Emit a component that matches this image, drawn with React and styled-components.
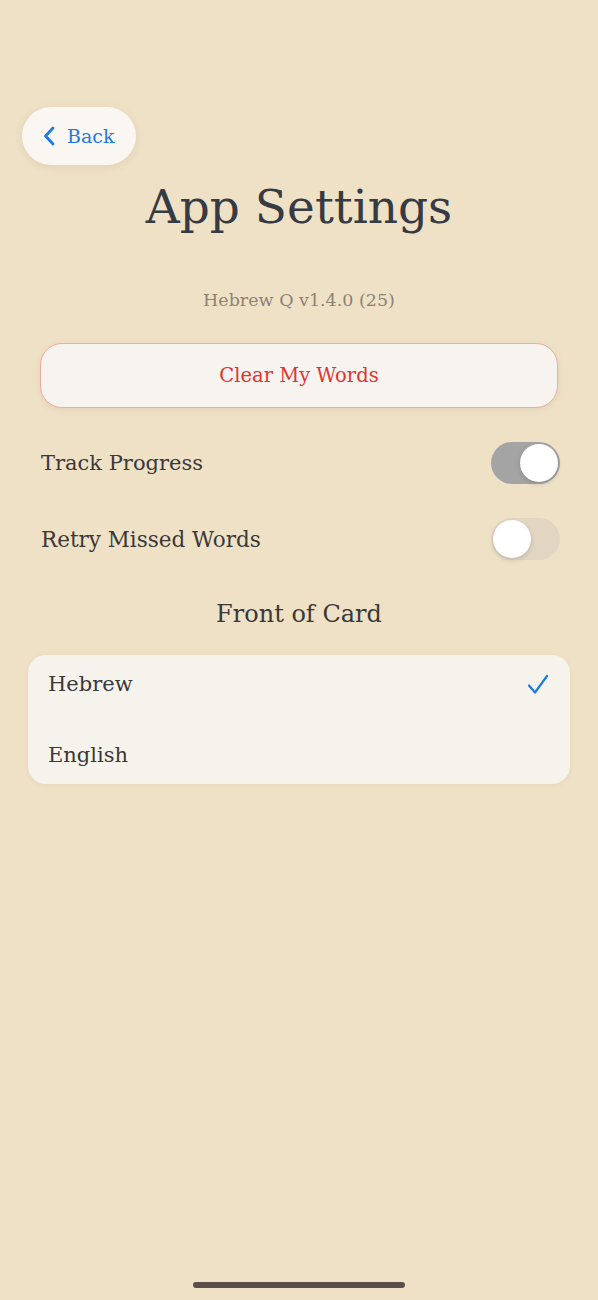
import React from "react";
import styled, { createGlobalStyle } from "styled-components";

const Global = createGlobalStyle`
  html, body { margin: 0; padding: 0; background: #efe1c6; }
  body { font-family: "DejaVu Serif", "Liberation Serif", serif; }
  * { box-sizing: border-box; }
`;

const Page = styled.div`
  width: 598px;
  height: 1300px;
  background: #efe1c6;
  display: flex;
  flex-direction: column;
  position: relative;
`;

const TopBar = styled.div`
  padding: 107px 0 0 22px;
  display: flex;
`;

const BackButton = styled.button`
  height: 58px;
  width: 114px;
  border: none;
  border-radius: 29px;
  background: #faf6f1;
  box-shadow: 0 2px 8px rgba(120, 95, 60, 0.12);
  display: flex;
  align-items: center;
  gap: 12px;
  padding: 0 0 0 21px;
  color: #1b7be6;
  font-family: inherit;
  font-size: 19px;
`;

const Title = styled.h1`
  margin: 14px 0 0;
  text-align: center;
  font-weight: 400;
  font-size: 47px;
  color: #363a42;
  line-height: 1.2;
`;

const Version = styled.div`
  margin-top: 55px;
  text-align: center;
  font-size: 17.5px;
  color: #8d8174;
`;

const Content = styled.div`
  padding: 0 40px;
  display: flex;
  flex-direction: column;
`;

const ClearButton = styled.button`
  margin-top: 33px;
  height: 65px;
  width: 100%;
  border-radius: 22px;
  border: 1.5px solid #f1aaa2;
  background: #f7f3ee;
  color: #e2332f;
  font-family: inherit;
  font-size: 19.5px;
  box-shadow: 0 2px 6px rgba(120, 95, 60, 0.1);
`;

const Row = styled.div`
  display: flex;
  align-items: center;
  justify-content: space-between;
  height: 76px;
  margin-right: -2px;
  margin-top: ${(p) => p.$mt || 0}px;
`;

const RowLabel = styled.span`
  font-size: ${(p) => p.$size || 21}px;
  color: #3a3838;
  padding-left: 1px;
`;

const Switch = styled.div`
  width: 69px;
  height: 42px;
  border-radius: 21px;
  background: ${(p) => (p.$on ? "#a4a4a4" : "#e2d6c2")};
  position: relative;
  flex-shrink: 0;
`;

const Knob = styled.div`
  position: absolute;
  top: 2px;
  left: ${(p) => (p.$on ? "29px" : "2px")};
  width: 38px;
  height: 38px;
  border-radius: 50%;
  background: #ffffff;
  box-shadow: 0 2px 5px rgba(0, 0, 0, 0.15);
`;

const SectionTitle = styled.div`
  text-align: center;
  font-size: 24px;
  color: #3a3838;
  margin-top: 23px;
`;

const Card = styled.div`
  margin: 27px 28px 0;
  background: #f6f2ec;
  border-radius: 18px;
  box-shadow: 0 1px 4px rgba(120, 95, 60, 0.08);
  display: flex;
  flex-direction: column;
  gap: 23px;
  padding: 5px 21px 5px 20px;
`;

const Option = styled.div`
  height: 48px;
  display: flex;
  align-items: center;
  justify-content: space-between;
  font-size: 21px;
  color: #3a3838;
`;

const HomeIndicator = styled.div`
  position: absolute;
  left: 193px;
  bottom: 12px;
  width: 212px;
  height: 6px;
  border-radius: 3px;
  background: #5b5049;
`;

const Check = () => (
  <svg width="22" height="21" viewBox="0 0 22 21" fill="none">
    <path d="M2 11.5 L8 18.5 L20 2" stroke="#1b7be6" strokeWidth="2.2" strokeLinecap="round" strokeLinejoin="round" />
  </svg>
);

const Chevron = () => (
  <svg width="12" height="20" viewBox="0 0 12 20" fill="none">
    <path d="M10 2 L2.5 10 L10 18" stroke="#1b7be6" strokeWidth="2.8" strokeLinecap="round" strokeLinejoin="round" />
  </svg>
);

export default function App() {
  return (
    <Page>
      <Global />
      <TopBar>
        <BackButton>
          <Chevron />
          <span>Back</span>
        </BackButton>
      </TopBar>
      <Title>App Settings</Title>
      <Version>Hebrew Q v1.4.0 (25)</Version>
      <Content>
        <ClearButton>Clear My Words</ClearButton>
        <Row $mt={17}>
          <RowLabel>Track Progress</RowLabel>
          <Switch $on>
            <Knob $on />
          </Switch>
        </Row>
        <Row>
          <RowLabel $size={21.5}>Retry Missed Words</RowLabel>
          <Switch>
            <Knob />
          </Switch>
        </Row>
      </Content>
      <SectionTitle>Front of Card</SectionTitle>
      <Card>
        <Option>
          <span>Hebrew</span>
          <Check />
        </Option>
        <Option>
          <span>English</span>
        </Option>
      </Card>
      <HomeIndicator />
    </Page>
  );
}
